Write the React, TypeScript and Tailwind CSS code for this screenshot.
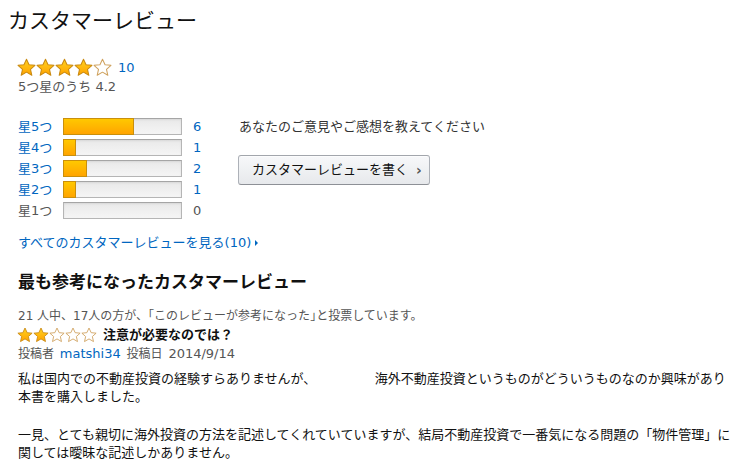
import React from "react";

const STAR = "M10 1.3 L12.7 7.1 L18.9 7.7 L14.2 11.9 L15.6 18.2 L10 14.9 L4.4 18.2 L5.8 11.9 L1.1 7.7 L7.3 7.1 Z";

function Star({ filled, size, id }: { filled: boolean; size: number; id: string }) {
  return (
    <svg width={size} height={size} viewBox="0 0 20 20" className="block">
      <defs>
        <linearGradient id={id} x1="0" y1="0" x2="0" y2="1">
          <stop offset="0" stopColor="#ffd21f" />
          <stop offset="1" stopColor="#ffa200" />
        </linearGradient>
      </defs>
      {filled ? (
        <path d={STAR} fill={`url(#${id})`} stroke="#c98a12" strokeWidth="1.1" strokeLinejoin="round" />
      ) : (
        <path d={STAR} fill="#fff" stroke="#cfa25e" strokeWidth="1.1" strokeLinejoin="round" />
      )}
    </svg>
  );
}

function Stars({ n, size, prefix }: { n: number; size: number; prefix: string }) {
  return (
    <div className="flex">
      {[0, 1, 2, 3, 4].map((i) => (
        <Star key={i} filled={i < n} size={size} id={`${prefix}${i}`} />
      ))}
    </div>
  );
}

const rows = [
  { label: "星5つ", count: 6, link: true },
  { label: "星4つ", count: 1, link: true },
  { label: "星3つ", count: 2, link: true },
  { label: "星2つ", count: 1, link: true },
  { label: "星1つ", count: 0, link: false },
];

const para1 =
  "私は国内での不動産投資の経験すらありませんが、\u3000\u3000\u3000\u3000\u3000海外不動産投資というものがどういうものなのか興味があり本書を購入しました。";
const para2 =
  "一見、とても親切に海外投資の方法を記述してくれていていますが、結局不動産投資で一番気になる問題の「物件管理」に関しては曖昧な記述しかありません。";

export default function App() {
  return (
    <div
      className="w-[748px] h-[473px] bg-white overflow-hidden text-[#111]"
      style={{ fontFamily: '"DejaVu Sans", "Noto Sans CJK JP", sans-serif' }}
    >
      <h1 className="pl-[8px] pt-[7px] text-[21px] leading-[28px] font-normal text-[#111]">カスタマーレビュー</h1>
      <div className="pl-[17px]">
        <div className="mt-[23px] h-[19px] flex items-center">
          <Stars n={4} size={19} prefix="h" />
          <span className="ml-[6px] text-[13px] text-[#0066c0] leading-[19px]">10</span>
        </div>
        <div className="mt-[1px] pl-[1px] text-[13px] leading-[18px] text-[#555]">5つ星のうち 4.2</div>

        <div className="mt-[20px] flex">
          <div className="w-[221px] pl-[1px]">
            {rows.map((r) => (
              <div key={r.label} className="h-[21px] flex items-center text-[13px]">
                <span className={`w-[45px] ${r.link ? "text-[#0066c0]" : "text-[#555]"}`}>{r.label}</span>
                <div className="w-[119px] h-[17px] flex border border-[#b5b5b5] border-t-[#a5a5a5] bg-gradient-to-b from-[#e9e9e9] to-[#f5f5f5] shadow-[inset_0_1px_2px_rgba(0,0,0,0.08)]">
                  {r.count > 0 && (
                    <div
                      className="-ml-px -my-px border border-[#c98f0c] bg-gradient-to-b from-[#ffc800] to-[#ffa400]"
                      style={{ width: `${Math.round((r.count / 10) * 117) + 1}px` }}
                    />
                  )}
                </div>
                <span className={`ml-[11px] ${r.link ? "text-[#0066c0]" : "text-[#555]"}`}>{r.count}</span>
              </div>
            ))}
          </div>
          <div>
            <div className="pl-[1px] text-[13px] leading-[21px] text-[#333]">あなたのご意見やご感想を教えてください</div>
            <div className="mt-[18px] w-[192px] h-[30px] flex items-center rounded-[3px] border border-[#adb1b8] border-t-[#a2a6ac] border-b-[#8d9096] bg-gradient-to-b from-[#f7f8fa] to-[#e7e9ec] shadow-[inset_0_1px_0_rgba(255,255,255,0.6)] pl-[13px] text-[13px] text-[#111]">
              <span>カスタマーレビューを書く</span>
              <span className="ml-[8px] text-[14px] font-bold text-[#555] leading-none">›</span>
            </div>
          </div>
        </div>

        <div className="mt-[13px] pl-[1px] h-[18px] flex items-center text-[13px] leading-[18px] text-[#0066c0]">
          <span>すべてのカスタマーレビューを見る(10)</span>
          <span className="ml-[4px] w-0 h-0 border-y-[3px] border-y-transparent border-l-[3px] border-l-[#0066c0]" />
        </div>

        <h2 className="mt-[18px] pl-[1px] text-[17px] leading-[24px] font-bold text-[#111]">最も参考になったカスタマーレビュー</h2>

        <div className="mt-[13px] pl-[1px] text-[12px] leading-[18px] text-[#555]">
          21 人中、17人の方が、「このレビューが参考になった<span style={{ fontFeatureSettings: '"halt"' }}>」</span>と投票しています。
        </div>
        <div className="h-[20px] flex items-center">
          <Stars n={2} size={16} prefix="s" />
          <span className="ml-[6px] text-[13px] font-bold text-[#111]">注意が必要なのでは？</span>
        </div>
        <div className="pl-[1px] text-[12px] leading-[18px] text-[#555] [word-spacing:2px]">
          投稿者 <span className="text-[13px] text-[#0066c0]">matshi34</span> 投稿日 <span className="text-[13px]">2014/9/14</span>
        </div>

        <div className="mt-[7px] pl-[1px] w-[720px] text-[13px] leading-[18px] text-[#111]">
          <p>{para1}</p>
          <p className="mt-[20px]">{para2}</p>
        </div>
      </div>
    </div>
  );
}
